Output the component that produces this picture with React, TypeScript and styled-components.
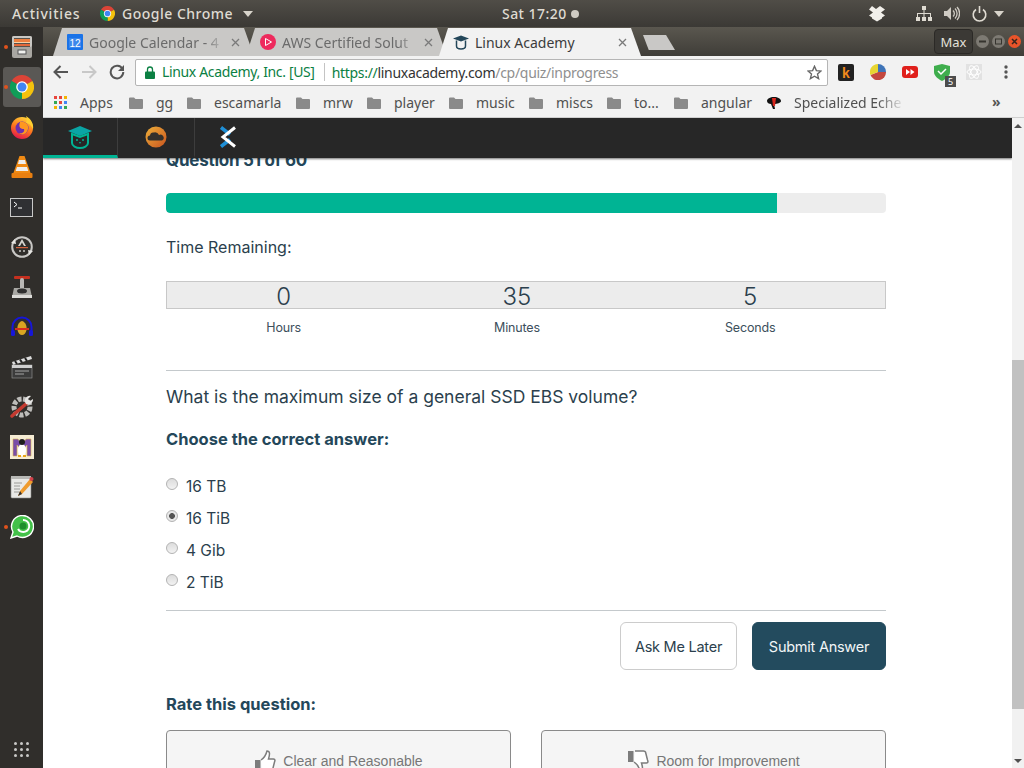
import React from "react";
import styled, { createGlobalStyle } from "styled-components";

const Global = createGlobalStyle`
  html, body { margin: 0; padding: 0; background: #fff; overflow: hidden; }
  * { box-sizing: border-box; }
`;

const ui = `"Noto Sans", "Open Sans", sans-serif`;
const page = `Inter, "Liberation Sans", sans-serif`;

const Screen = styled.div`
  width: 1024px; height: 768px; display: flex; flex-direction: column; overflow: hidden;
`;
const TopBar = styled.header`
  height: 27px; flex: none; display: flex; align-items: center; padding: 0 12px;
  background: linear-gradient(#504d47, #3b3935);
  color: #dfdbd2; font: 500 14px ${ui}; letter-spacing: 0.45px;
`;
const Activities = styled.span`
  width: 68px; letter-spacing: 0.8px;
`;
const AppMenu = styled.div`
  display: flex; align-items: center; gap: 7px; margin-left: 20px; width: 402px; letter-spacing: 0.5px;
`;
const Caret = styled.span`
  width: 0; height: 0; border: 5px solid transparent; border-top: 6px solid #d8d4cb; border-bottom: 0; margin-left: 3px;
`;
const Clock = styled.div`
  display: flex; align-items: center; gap: 4px; flex: 1;
`;
const Dot = styled.span`
  width: 8px; height: 8px; border-radius: 50%; background: #cfcbc3;
`;
const Tray = styled.div`
  display: flex; align-items: center; gap: 12px; margin-right: 8px;
`;
const Body = styled.div`
  flex: 1; display: flex; min-height: 0;
`;
const Dock = styled.nav`
  width: 43px; flex: none; background: #302e2b; display: flex; flex-direction: column; align-items: center; position: relative;
`;
const DockItem = styled.div<{ $active?: boolean }>`
  width: 38px; height: 40px; display: flex; align-items: center; justify-content: center; position: relative; border-radius: 3px;
  background: ${(p) => (p.$active ? "#5a5855" : "transparent")};
`;
const Pip = styled.span`
  position: absolute; left: 1px; top: 18px; width: 4px; height: 4px; border-radius: 50%; background: #e0521d;
`;
const DockGrid = styled.div`
  margin-top: auto; margin-bottom: 11px; display: grid; grid-template-columns: repeat(3, 3px); gap: 3px;
`;
const GridDot = styled.span`
  width: 3px; height: 3px; background: #c9c8c6; border-radius: 50%;
`;
const Browser = styled.div`
  flex: 1; display: flex; flex-direction: column; min-width: 0;
`;
const TabStrip = styled.div`
  height: 29px; flex: none; display: flex; align-items: flex-end; padding-left: 10px;
  background: linear-gradient(#5a574f, #3f3d38); position: relative;
`;
const Tab = styled.div<{ $active?: boolean; $w: number }>`
  width: ${(p) => p.$w}px; height: 28px; flex: none; margin-right: -8px;
  display: flex; align-items: center; padding: 0 12px 0 14px; gap: 6px; position: relative;
  z-index: ${(p) => (p.$active ? 2 : 1)};
  clip-path: polygon(0 100%, 9px 0, calc(100% - 10px) 0, 100% 100%);
  background: ${(p) => (p.$active ? "#f2f2f2" : "#c9c8c6")};
  color: ${(p) => (p.$active ? "#3c3c3c" : "#6b6b6b")};
  font: 400 14px ${ui};
`;
const TabLabel = styled.span<{ $fade?: boolean }>`
  flex: 1; white-space: nowrap; overflow: hidden;
  ${(p) => p.$fade && "-webkit-mask-image: linear-gradient(90deg, #000 85%, transparent);"}
`;
const TabClose = styled.svg`
  width: 9px; height: 9px; flex: none; margin-right: 2px;
`;
const NewTab = styled.div`
  width: 32px; height: 15px; margin: 0 0 6px 10px; background: #c9c8c6; flex: none;
  clip-path: polygon(0 0, 72% 0, 100% 100%, 18% 100%);
`;
const WindowControls = styled.div`
  position: absolute; right: 3px; top: 2px; display: flex; align-items: center; gap: 3px;
`;
const MaxBadge = styled.div`
  width: 39px; height: 25px; border: 1px solid #2b2926; border-radius: 4px; background: #3b3935;
  color: #e4e1db; font: 400 13px ${ui}; display: flex; align-items: center; justify-content: center;
`;
const WinBtn = styled.svg`
  width: 13px; height: 13px; flex: none;
`;
const Toolbar = styled.div`
  height: 32px; flex: none; background: #f2f2f2; display: flex; align-items: center; padding: 0 0 0 4px;
`;
const NavBtn = styled.div`
  width: 28px; display: flex; justify-content: center;
`;
const Omnibox = styled.div`
  width: 693px; height: 27px; margin-left: 4px; background: #fff; border: 1px solid #b5b5b5; border-radius: 2px;
  display: flex; align-items: center; padding: 0 5px 0 9px; font: 400 14px ${ui}; white-space: nowrap;
`;
const Secure = styled.span`
  color: #0b8043; margin-left: 7px; padding-right: 9px; border-right: 1px solid #c4c4c4; line-height: 18px; letter-spacing: -0.35px;
`;
const Url = styled.span`
  margin-left: 7px; flex: 1; color: #333; letter-spacing: -0.3px;
`;
const Scheme = styled.span`color: #0b8043;`;
const Path = styled.span`color: #8f8f8f;`;
const Exts = styled.div`
  display: flex; align-items: center; margin-left: 2px;
`;
const Ext = styled.div`
  width: 32px; height: 24px; display: flex; align-items: center; justify-content: center; position: relative;
`;
const Badge = styled.span`
  position: absolute; right: 2px; bottom: -3px; width: 11px; height: 11px; background: #4d4d4d; color: #fff;
  font: 400 9px/11px ${ui}; text-align: center;
`;
const Bookmarks = styled.div`
  height: 30px; flex: none; background: #f2f2f2; border-bottom: 1px solid #cfcfcf; display: flex; align-items: center; padding: 0 10px 0 11px;
  font: 400 14px ${ui}; color: #505050; white-space: nowrap; position: relative;
`;
const Mark = styled.div<{ $w: number }>`
  width: ${(p) => p.$w}px; flex: none; display: flex; align-items: center; gap: 13px;
`;
const MarkFade = styled.span`
  width: 111px; overflow: hidden; -webkit-mask-image: linear-gradient(90deg, #000 75%, transparent);
`;
const More = styled.span`
  position: absolute; left: 949px; top: 4px; font: 700 14px ${ui}; color: #555;
`;
const PageArea = styled.div`
  flex: 1; display: flex; min-height: 0;
`;
const Main = styled.main`
  flex: 1; min-width: 0; display: flex; flex-direction: column; background: #fff; overflow: hidden;
`;
const AppBar = styled.div`
  height: 40px; flex: none; background: #272727; display: flex; position: relative; z-index: 3;
  box-shadow: 0 1px 2px rgba(0,0,0,.55);
`;
const AppTab = styled.div<{ $active?: boolean; $w: number; $last?: boolean }>`
  width: ${(p) => p.$w}px; display: flex; align-items: center; justify-content: center;
  border-right: 1px solid ${(p) => (p.$last ? "transparent" : "#3d3d3d")};
  border-bottom: 3px solid ${(p) => (p.$active ? "#00b494" : "transparent")};
`;
const Content = styled.div`
  width: 720px; margin: -6px 0 0 123px; flex: none; color: #1e3a4c; font-family: ${page};
`;
const Heading = styled.h2`
  margin: 0; height: 16px; font: 700 17px/16px ${page}; color: #24475a; letter-spacing: -0.25px; white-space: nowrap;
`;
const Progress = styled.div`
  margin-top: 25px; height: 20px; background: #ededed; border-radius: 4px; overflow: hidden;
`;
const ProgressFill = styled.div`
  height: 100%; background: #00b494; border-radius: 4px 0 0 4px;
`;
const TimeLabel = styled.div`
  margin-top: 24px; font: 400 16px/20px ${page}; color: #2b3f4d; letter-spacing: 0;
`;
const Timer = styled.div`
  margin-top: 24px; height: 28px; background: #ececec; border: 1px solid #c8c8c8; display: grid; grid-template-columns: repeat(3, 233.3px);
`;
const TimerValue = styled.div`
  text-align: center; font: 300 24px/28px ${page}; color: #2b3f4d; padding-top: 1px;
`;
const TimerCaptions = styled.div`
  margin-top: 10px; padding-left: 1px; display: grid; grid-template-columns: repeat(3, 233.3px);
`;
const Caption = styled.div`
  text-align: center; font: 400 12.5px/18px ${page}; color: #3c4f5c; letter-spacing: -0.15px;
`;
const Rule = styled.hr<{ $top: number }>`
  margin: ${(p) => p.$top}px 0 0; border: 0; border-top: 1px solid #c4c9cc; height: 0;
`;
const Prompt = styled.div`
  margin-top: 15px; font: 400 17.5px/22px ${page}; color: #2b3f4d; letter-spacing: 0;
`;
const Choose = styled.div`
  margin-top: 21px; font: 700 16.5px/20px ${page}; color: #24475a; letter-spacing: 0;
`;
const Options = styled.div`
  margin-top: 22px; display: flex; flex-direction: column;
`;
const Option = styled.label`
  height: 32px; display: flex; align-items: center; gap: 8px; font: 400 15.5px/32px ${page}; color: #2b3f4d; letter-spacing: 0;
`;
const Radio = styled.span<{ $on?: boolean }>`
  width: 12px; height: 12px; border-radius: 50%; border: 1px solid #b3b3b3; margin-bottom: 7px; flex: none;
  background: ${(p) => (p.$on ? "radial-gradient(circle, #555 0 2.6px, #e8e8e8 3.2px)" : "linear-gradient(#dcdcdc, #f2f2f2)")};
`;
const Actions = styled.div`
  margin-top: 11px; display: flex; justify-content: flex-end; gap: 15px;
`;
const Btn = styled.div<{ $primary?: boolean; $w: number }>`
  width: ${(p) => p.$w}px; height: 48px; border-radius: 6px; display: flex; align-items: center; justify-content: center;
  font: 400 14.5px ${page}; letter-spacing: -0.25px;
  background: ${(p) => (p.$primary ? "#234b5e" : "#fff")};
  color: ${(p) => (p.$primary ? "#f2f6f7" : "#2b3f4d")};
  border: 1px solid ${(p) => (p.$primary ? "#234b5e" : "#ccc")};
`;
const Rate = styled.div`
  margin-top: 24px; font: 700 16.5px/20px ${page}; color: #24475a; letter-spacing: 0;
`;
const RateRow = styled.div`
  margin-top: 16px; display: grid; grid-template-columns: 345px 345px; gap: 30px;
`;
const RateCard = styled.div`
  height: 70px; background: #f5f5f5; border: 1px solid #8a8a8a; border-radius: 4px; padding-top: 19px;
  display: flex; justify-content: center; align-items: flex-start; gap: 7px;
  font: 400 14px/22px "Liberation Sans", sans-serif; color: #777;
`;
const Scrollbar = styled.div`
  width: 12px; flex: none; background: #f1f1f1; position: relative;
`;
const ScrollThumb = styled.div`
  position: absolute; left: 0; top: 242px; width: 12px; height: 349px; background: #c1c1c1;
`;
const Arrow = styled.span<{ $down?: boolean }>`
  position: absolute; left: 2px; ${(p) => (p.$down ? "bottom: 5px;" : "top: 6px;")} width: 0; height: 0;
  border-left: 4px solid transparent; border-right: 4px solid transparent;
  ${(p) => (p.$down ? "border-top: 4px solid #505050;" : "border-bottom: 4px solid #505050;")}
`;

const ChromeLogo = ({ s = 24 }: { s?: number }) => (
  <svg width={s} height={s} viewBox="0 0 24 24">
    <path d="M12 12L1.6 6A12 12 0 0 1 22.4 6Z" fill="#db4437" />
    <path d="M12 12L22.4 6A12 12 0 0 1 12 24Z" fill="#f4c20d" />
    <path d="M12 12L12 24A12 12 0 0 1 1.6 6Z" fill="#0f9d58" />
    <circle cx="12" cy="12" r="5.8" fill="#fff" />
    <circle cx="12" cy="12" r="4.5" fill="#4285f4" />
  </svg>
);
const Files = () => (
  <svg width="20" height="22" viewBox="0 0 20 22">
    <rect width="20" height="22" rx="2" fill="#a9a7a2" />
    <rect x="0" y="0" width="20" height="11" rx="2" fill="#c9c7c3" />
    <rect x="2" y="2" width="16" height="9" fill="#57524b" />
    <rect x="2" y="3" width="16" height="3" fill="#ee7f3f" />
    <rect x="2" y="6" width="16" height="1" fill="#f7d0a8" />
    <rect x="2" y="8" width="16" height="2" fill="#e2683a" />
    <rect x="6" y="14" width="8" height="4" fill="#f0f0ee" stroke="#555" />
  </svg>
);
const Firefox = () => (
  <svg width="24" height="24" viewBox="0 0 24 24">
    <defs>
      <linearGradient id="ff" x1="0.7" y1="0" x2="0.3" y2="1">
        <stop offset="0" stopColor="#ffd23a" /><stop offset=".5" stopColor="#ff7a1c" /><stop offset="1" stopColor="#e0124f" />
      </linearGradient>
    </defs>
    <circle cx="12" cy="13" r="11" fill="url(#ff)" />
    <path d="M16 1c5 3 8 8 7 13-2-4-4-6-7-6 1-2 1-5 0-7z" fill="#ffcf30" />
    <circle cx="12" cy="13" r="6.5" fill="#6b2fb0" />
    <path d="M10 7c5-1 9 2 8 7s-6 7-9 4c3 1 6-1 5-4-3 0-6-1-4-7z" fill="#ff9720" />
  </svg>
);
const Vlc = () => (
  <svg width="22" height="24" viewBox="0 0 22 24">
    <path d="M8.5 1h5L20 19H2z" fill="#f08a14" />
    <path d="M8 5h6l1 4H7z M6 12h10l1.3 4H4.700z" fill="#eee" />
    <rect x="0.500" y="18" width="21" height="5" rx="1" fill="#e97f10" />
  </svg>
);
const Terminal = () => (
  <svg width="23" height="19" viewBox="0 0 23 19">
    <rect x=".5" y=".5" width="22" height="18" fill="#2f3033" stroke="#c9c9c9" />
    <path d="M4 4l3 2.500L4 9" stroke="#fff" strokeWidth="1" fill="none" />
    <path d="M8 10h4" stroke="#fff" strokeWidth="1" />
  </svg>
);
const Updater = () => (
  <svg width="24" height="24" viewBox="0 0 24 24">
    <circle cx="12" cy="12" r="9.800" fill="none" stroke="#c9c8c5" strokeWidth="2" />
    <path d="M1 8l5 1-1-5zM23 16l-5-1 1 5z" fill="#e6e5e2" />
    <path d="M8 11l4-7 4 7h-2l-2-3.500L10 11z" fill="#d5d4d0" />
    <rect x="6" y="12" width="12" height="1.200" fill="#d2603c" />
    <circle cx="10" cy="16" r="1" fill="#c9c8c5" /><circle cx="14" cy="16" r="1" fill="#c9c8c5" />
  </svg>
);
const Joystick = () => (
  <svg width="22" height="24" viewBox="0 0 22 24">
    <rect x="3" y="1" width="16" height="3" rx="1" fill="#c5301f" />
    <rect x="9" y="3" width="4" height="12" rx="2" fill="#b9b8b5" />
    <path d="M3 13h16l2 9H1z" fill="#a8a7a3" />
    <ellipse cx="11" cy="16" rx="5" ry="2.500" fill="#2f2f2f" />
    <rect x="1" y="20" width="20" height="3" fill="#dcdbd8" />
  </svg>
);
const Audacity = () => (
  <svg width="24" height="24" viewBox="0 0 24 24">
    <path d="M2.500 18V12a9.500 9.500 0 0 1 19 0v6" fill="none" stroke="#1616d8" strokeWidth="2" />
    <rect x="1" y="15" width="4" height="6" rx="1.500" fill="#1616d8" />
    <rect x="19" y="15" width="4" height="6" rx="1.500" fill="#1616d8" />
    <path d="M12 6c4 1 5 6 4.500 9-.5 3-2.500 5-4.500 5s-4-2-4.500-5C7 12 8 7 12 6z" fill="#d9a521" />
    <rect x="5" y="13" width="14" height="2" fill="#d72f20" />
  </svg>
);
const Clapper = () => (
  <svg width="22" height="24" viewBox="0 0 22 24">
    <path d="M1 7L20 1l1 3L2 10z" fill="#ddd" />
    <path d="M4 6l2 3M9 4.500l2 3M14 3l2 3" stroke="#222" strokeWidth="2" />
    <rect x="1" y="10" width="20" height="13" fill="#3b3b3b" stroke="#999" strokeWidth=".6" />
    <rect x="1" y="10" width="20" height="3" fill="#cfcfcf" />
    <path d="M4 16h14M4 19h9" stroke="#a5a5a5" />
  </svg>
);
const Tools = () => (
  <svg width="24" height="24" viewBox="0 0 24 24">
    <circle cx="12" cy="12" r="8" fill="none" stroke="#bdbcb9" strokeWidth="5" strokeDasharray="4 1.500" />
    <path d="M2 21L17 8" stroke="#c43a30" strokeWidth="3.500" strokeLinecap="round" />
    <path d="M15 7a5 5 0 0 1 6-6l-3 3 2 2 3-2a5 5 0 0 1-7 5z" fill="#e6e5e3" />
  </svg>
);
const TuxM = () => (
  <svg width="24" height="24" viewBox="0 0 24 24">
    <rect width="24" height="24" fill="#f6ecd4" />
    <path d="M3 4h5l4 6 4-6h5v17h-4V10l-5 6-5-6v11H3z" fill="#7a4ea8" stroke="#d9b64c" strokeWidth=".6" />
    <ellipse cx="12" cy="15" rx="4" ry="6" fill="#fff" />
    <circle cx="12" cy="7" r="3" fill="#1e1e1e" />
    <path d="M8 20h3v2H8zM13 20h3v2h-3z" fill="#e9a71c" />
  </svg>
);
const Notepad = () => (
  <svg width="24" height="24" viewBox="0 0 24 24">
    <rect x="1" y="2" width="20" height="21" rx="1" fill="#e9e9e6" stroke="#8a8a86" strokeWidth=".6" />
    <rect x="1" y="1" width="20" height="3" fill="#b8b8b5" />
    <path d="M4 8h8M4 11h6M4 14h6M4 17h5" stroke="#9a9a96" />
    <path d="M8 21l2-5L20 4l3 3L12 19z" fill="#ef9b2d" />
    <path d="M8 21l2-5 2 3z" fill="#333" />
    <circle cx="21.500" cy="4" r="2" fill="#d3424a" />
  </svg>
);
const Whats = () => (
  <svg width="24" height="24" viewBox="0 0 24 24">
    <path d="M1 23l2-6a11 11 0 1 1 4 4z" fill="#43c149" stroke="#fff" strokeWidth="1.400" />
    <path d="M13 5a6 6 0 1 1-5 9" fill="none" stroke="#fff" strokeWidth="2" />
    <circle cx="13" cy="11" r="3.500" fill="#1f8f2d" />
  </svg>
);
const Folder = () => (
  <svg width="14" height="12" viewBox="0 0 14 12">
    <path d="M0 1.500A1 1 0 0 1 1 .5h4l1.500 1.500H13a1 1 0 0 1 1 1V11a1 1 0 0 1-1 1H1a1 1 0 0 1-1-1z" fill="#8a8a8a" />
  </svg>
);
const Thumb = ({ down }: { down?: boolean }) => (
  <svg width="22" height="22" viewBox="0 0 22 22" style={down ? { transform: "scaleY(-1)" } : undefined}>
    <path d="M7 10c3-2 5-5 6-9 3 0 3 3 1.500 8h5c2 0 1.500 2 1 3l-2 8c-.3 1-1 1-2 1H8" fill="#fff" stroke="#7c7c7c" strokeWidth="1.500" />
    <rect x="1" y="10" width="5.500" height="11" fill="#7c7c7c" />
  </svg>
);

const tabClose = (
  <TabClose viewBox="0 0 9 9"><path d="M1 1l7 7M8 1L1 8" stroke="#7a7a7a" strokeWidth="1.300" /></TabClose>
);

const dockIcons = [
  { c: <Files />, pip: true }, { c: <ChromeLogo />, pip: true, active: true }, { c: <Firefox /> }, { c: <Vlc /> },
  { c: <Terminal /> }, { c: <Updater /> }, { c: <Joystick /> }, { c: <Audacity /> }, { c: <Clapper /> },
  { c: <Tools /> }, { c: <TuxM /> }, { c: <Notepad /> }, { c: <Whats />, pip: true },
];
const marks: [string, number][] = [
  ["gg", 58], ["escamarla", 109], ["mrw", 71], ["player", 82], ["music", 80], ["miscs", 78], ["to...", 67], ["angular", 93],
];

export default function App() {
  return (
    <Screen>
      <Global />
      <TopBar>
        <Activities>Activities</Activities>
        <AppMenu>
          <ChromeLogo s={15} />
          <span>Google Chrome</span>
          <Caret />
        </AppMenu>
        <Clock><span>Sat 17:20</span><Dot /></Clock>
        <Tray>
          <svg width="18" height="16" viewBox="0 0 18 16"><path d="M5 0l4 3 4-3 5 3.500-4 3 4 3-3 2v1l-5 3-5-3v-1l-3-2 4-3-4-3z" fill="#f1efea" /></svg>
          <svg width="16" height="16" viewBox="0 0 16 16" style={{ marginLeft: 19 }}><path d="M6 0h4v4H8.500v3H15v4h1v4h-4v-4h2V8H8.500v3H10v4H6v-4h1.500V8H2v3h2v4H0v-4h1V7h6.500V4H6z" fill="#dfdbd2" /></svg>
          <svg width="16" height="15" viewBox="0 0 16 15"><path d="M0 5h3l4-4v13l-4-4H0z" fill="#cfcbc3" /><path d="M9 4.500a4 4 0 0 1 0 6M11 2.500a7 7 0 0 1 0 10M13 1a9.500 9.500 0 0 1 0 13" fill="none" stroke="#cfcbc3" strokeWidth="1.300" /></svg>
          <svg width="15" height="16" viewBox="0 0 15 16"><path d="M4 3.500a6.300 6.300 0 1 0 7 0" fill="none" stroke="#dfdbd2" strokeWidth="1.600" /><path d="M7.500 0v7" stroke="#dfdbd2" strokeWidth="1.600" /></svg>
          <Caret style={{ marginLeft: -5 }} />
        </Tray>
      </TopBar>
      <Body>
        <Dock>
          {dockIcons.map((d, i) => (
            <DockItem key={i} $active={d.active}>
              {d.pip && <Pip />}
              {d.c}
            </DockItem>
          ))}
          <DockGrid>{Array.from({ length: 9 }).map((_, i) => <GridDot key={i} />)}</DockGrid>
        </Dock>
        <Browser>
          <TabStrip>
            <Tab $w={201}>
              <svg width="16" height="16" viewBox="0 0 16 16" style={{ flex: "none" }}><rect width="16" height="16" rx="1" fill="#1a73e8" /><rect x="2" y="4" width="12" height="10" fill="#fff" fillOpacity=".15" /><text x="8" y="13" fontSize="10" fontFamily="Liberation Sans" fill="#fff" textAnchor="middle">12</text></svg>
              <TabLabel $fade>Google Calendar - 4</TabLabel>
              {tabClose}
            </Tab>
            <Tab $w={201}>
              <svg width="16" height="16" viewBox="0 0 16 16" style={{ flex: "none" }}><circle cx="8" cy="8" r="8" fill="#ee2a5d" /><path d="M5.500 4.500v7l6-3.500z" fill="none" stroke="#fff" /></svg>
              <TabLabel $fade>AWS Certified Solut</TabLabel>
              {tabClose}
            </Tab>
            <Tab $w={202} $active>
              <svg width="16" height="16" viewBox="0 0 16 16" style={{ flex: "none" }}><path d="M0 4.500l8-3 8 3-8 3z" fill="#24475a" /><path d="M3.500 6.500V12c0 2 2 3 4.500 3s4.500-1 4.500-3V6.500" fill="none" stroke="#24475a" strokeWidth="1.500" /></svg>
              <TabLabel>Linux Academy</TabLabel>
              {tabClose}
            </Tab>
            <NewTab />
            <WindowControls>
              <MaxBadge>Max</MaxBadge>
              <WinBtn viewBox="0 0 13 13"><circle cx="6.500" cy="6.500" r="6.500" fill="#7d7a73" /><rect x="3" y="5.500" width="7" height="2" fill="#36342f" /></WinBtn>
              <WinBtn viewBox="0 0 13 13"><circle cx="6.500" cy="6.500" r="6.500" fill="#7d7a73" /><rect x="3.500" y="4" width="6" height="5" fill="none" stroke="#36342f" /></WinBtn>
              <WinBtn viewBox="0 0 13 13"><circle cx="6.500" cy="6.500" r="6.500" fill="#e9542a" /><path d="M4 4l5 5M9 4l-5 5" stroke="#36251e" strokeWidth="1.500" /></WinBtn>
            </WindowControls>
          </TabStrip>
          <Toolbar>
            <NavBtn><svg width="16" height="14" viewBox="0 0 16 14"><path d="M15 7H2M7.500 1L1.500 7l6 6" fill="none" stroke="#555" strokeWidth="2" /></svg></NavBtn>
            <NavBtn><svg width="16" height="14" viewBox="0 0 16 14"><path d="M1 7h13M8.500 1l6 6-6 6" fill="none" stroke="#c8c8c8" strokeWidth="2" /></svg></NavBtn>
            <NavBtn><svg width="16" height="16" viewBox="0 0 16 16"><path d="M13.500 5A6.300 6.300 0 1 0 14.300 8" fill="none" stroke="#555" strokeWidth="2" /><path d="M15 1v6H9z" fill="#555" /></svg></NavBtn>
            <Omnibox>
              <svg width="10" height="13" viewBox="0 0 10 13" style={{ flex: "none" }}><path d="M2.500 6V3.500a2.500 2.500 0 0 1 5 0V6" fill="none" stroke="#0b8043" strokeWidth="1.300" /><rect y="5.500" width="10" height="7.500" rx="1" fill="#0b8043" /></svg>
              <Secure>Linux Academy, Inc. [US]</Secure>
              <Url><Scheme>https://</Scheme>linuxacademy.com<Path>/cp/quiz/inprogress</Path></Url>
              <svg width="15" height="15" viewBox="0 0 24 24" style={{ flex: "none" }}><path d="M12 2l3 7 7.500.6-5.700 4.900 1.800 7.400L12 18l-6.600 3.900 1.800-7.400L1.500 9.600 9 9z" fill="none" stroke="#666" strokeWidth="2.200" /></svg>
            </Omnibox>
            <Exts>
              <Ext><svg width="16" height="17" viewBox="0 0 16 17"><rect width="16" height="17" rx="2" fill="#222" /><text x="8" y="14" fontSize="14" fontFamily="Liberation Sans" fontWeight="700" fill="#f28a1c" textAnchor="middle">k</text></svg></Ext>
              <Ext><svg width="16" height="16" viewBox="0 0 16 16"><path d="M8 8V0a8 8 0 0 1 8 8z" fill="#3f74b8" /><path d="M8 8H16A8 8 0 0 1 .5 11z" fill="#c4483f" /><path d="M8 8L.5 11A8 8 0 0 1 8 0z" fill="#e7d532" /></svg></Ext>
              <Ext><svg width="16" height="12" viewBox="0 0 16 12"><rect width="16" height="12" rx="3" fill="#e0201c" /><path d="M4 3l4 3-4 3zM8.500 3l4 3-4 3z" fill="#fff" /></svg></Ext>
              <Ext>
                <svg width="16" height="17" viewBox="0 0 16 17"><path d="M8 0l8 2v6c0 4-4 7-8 9-4-2-8-5-8-9V2z" fill="#3fae4d" /><path d="M4 7l3 3 5-5" fill="none" stroke="#fff" strokeWidth="1.500" /></svg>
                <Badge>5</Badge>
              </Ext>
              <Ext><svg width="16" height="16" viewBox="0 0 16 16"><rect width="16" height="16" fill="#e2e2e2" /><g fill="none" stroke="#fff"><ellipse cx="8" cy="8" rx="7" ry="3" /><ellipse cx="8" cy="8" rx="7" ry="3" transform="rotate(60 8 8)" /><ellipse cx="8" cy="8" rx="7" ry="3" transform="rotate(120 8 8)" /></g></svg></Ext>
              <Ext><svg width="4" height="14" viewBox="0 0 4 14"><circle cx="2" cy="2" r="1.700" fill="#555" /><circle cx="2" cy="7" r="1.700" fill="#555" /><circle cx="2" cy="12" r="1.700" fill="#555" /></svg></Ext>
            </Exts>
          </Toolbar>
          <Bookmarks>
            <Mark $w={75}>
              <svg width="13" height="13" viewBox="0 0 13 13" style={{ flex: "none" }}>
                {["#e8453c", "#e8453c", "#f4b400", "#34a853", "#e8453c", "#4285f4", "#f4b400", "#4285f4", "#34a853"].map((c, i) => (
                  <rect key={i} x={(i % 3) * 5} y={Math.floor(i / 3) * 5} width="3" height="3" fill={c} />
                ))}
              </svg>
              <span>Apps</span>
            </Mark>
            {marks.map(([t, w]) => (
              <Mark key={t} $w={w}><Folder /><span>{t}</span></Mark>
            ))}
            <Mark $w={138}>
              <svg width="14" height="14" viewBox="0 0 14 14" style={{ flex: "none" }}><path d="M7 1C3 1 0 3 0 5s2 3 4 3l2 5h2l-1-5c3 0 7-1 7-3S11 1 7 1z" fill="#111" /><path d="M5 2l4 0-1 8-2 0z" fill="#d9261c" /></svg>
              <MarkFade>Specialized Eche</MarkFade>
            </Mark>
            <More>»</More>
          </Bookmarks>
          <PageArea>
            <Main>
              <AppBar>
                <AppTab $w={75} $active>
                  <svg width="24" height="24" viewBox="0 0 24 24"><path d="M0 6l12-5 12 5-12 5z" fill="#0aa5a5" /><path d="M4 9v9c0 3 4 5 8 5s8-2 8-5V9l-8 3z" fill="none" stroke="#00b494" strokeWidth="2" /><circle cx="9" cy="15" r="1" fill="#00b494" /><circle cx="15" cy="15" r="1" fill="#00b494" /><path d="M11 17h2l-1 2z" fill="#00b494" /></svg>
                </AppTab>
                <AppTab $w={77}>
                  <svg width="22" height="22" viewBox="0 0 22 22">
                    <defs><linearGradient id="oc" x1="0" y1="0" x2="1" y2="1"><stop offset="0" stopColor="#eeb03a" /><stop offset="1" stopColor="#c9541f" /></linearGradient></defs>
                    <circle cx="11" cy="11" r="10.500" fill="url(#oc)" />
                    <path d="M5 14.500a2.500 2.500 0 0 1 0-5 3.500 3.500 0 0 1 4-3 4.500 4.500 0 0 1 5 2.500 3 3 0 0 1 3 5.500z" fill="#33302c" />
                  </svg>
                </AppTab>
                <AppTab $w={66} $last>
                  <svg width="16" height="22" viewBox="0 0 16 22"><path d="M1 1.500L10 8.500M1 20.500L10 13.500" fill="none" stroke="#1f8fd6" strokeWidth="3.500" /><path d="M15 1.500L3 11l12 9.500" fill="none" stroke="#fff" strokeWidth="3" /></svg>
                </AppTab>
              </AppBar>
              <Content>
                <Heading>Question 51 of 60</Heading>
                <Progress><ProgressFill style={{ width: `${(611 / 720) * 100}%` }} /></Progress>
                <TimeLabel>Time Remaining:</TimeLabel>
                <Timer>
                  <TimerValue>0</TimerValue><TimerValue>35</TimerValue><TimerValue>5</TimerValue>
                </Timer>
                <TimerCaptions>
                  <Caption>Hours</Caption><Caption>Minutes</Caption><Caption>Seconds</Caption>
                </TimerCaptions>
                <Rule $top={33} />
                <Prompt>What is the maximum size of a general SSD EBS volume?</Prompt>
                <Choose>Choose the correct answer:</Choose>
                <Options>
                  <Option><Radio />16 TB</Option>
                  <Option><Radio $on />16 TiB</Option>
                  <Option><Radio />4 Gib</Option>
                  <Option><Radio />2 TiB</Option>
                </Options>
                <Rule $top={11} />
                <Actions>
                  <Btn $w={117}>Ask Me Later</Btn>
                  <Btn $w={134} $primary>Submit Answer</Btn>
                </Actions>
                <Rate>Rate this question:</Rate>
                <RateRow>
                  <RateCard><Thumb />Clear and Reasonable</RateCard>
                  <RateCard><Thumb down />Room for Improvement</RateCard>
                </RateRow>
              </Content>
            </Main>
            <Scrollbar>
              <Arrow />
              <ScrollThumb />
              <Arrow $down />
            </Scrollbar>
          </PageArea>
        </Browser>
      </Body>
    </Screen>
  );
}
